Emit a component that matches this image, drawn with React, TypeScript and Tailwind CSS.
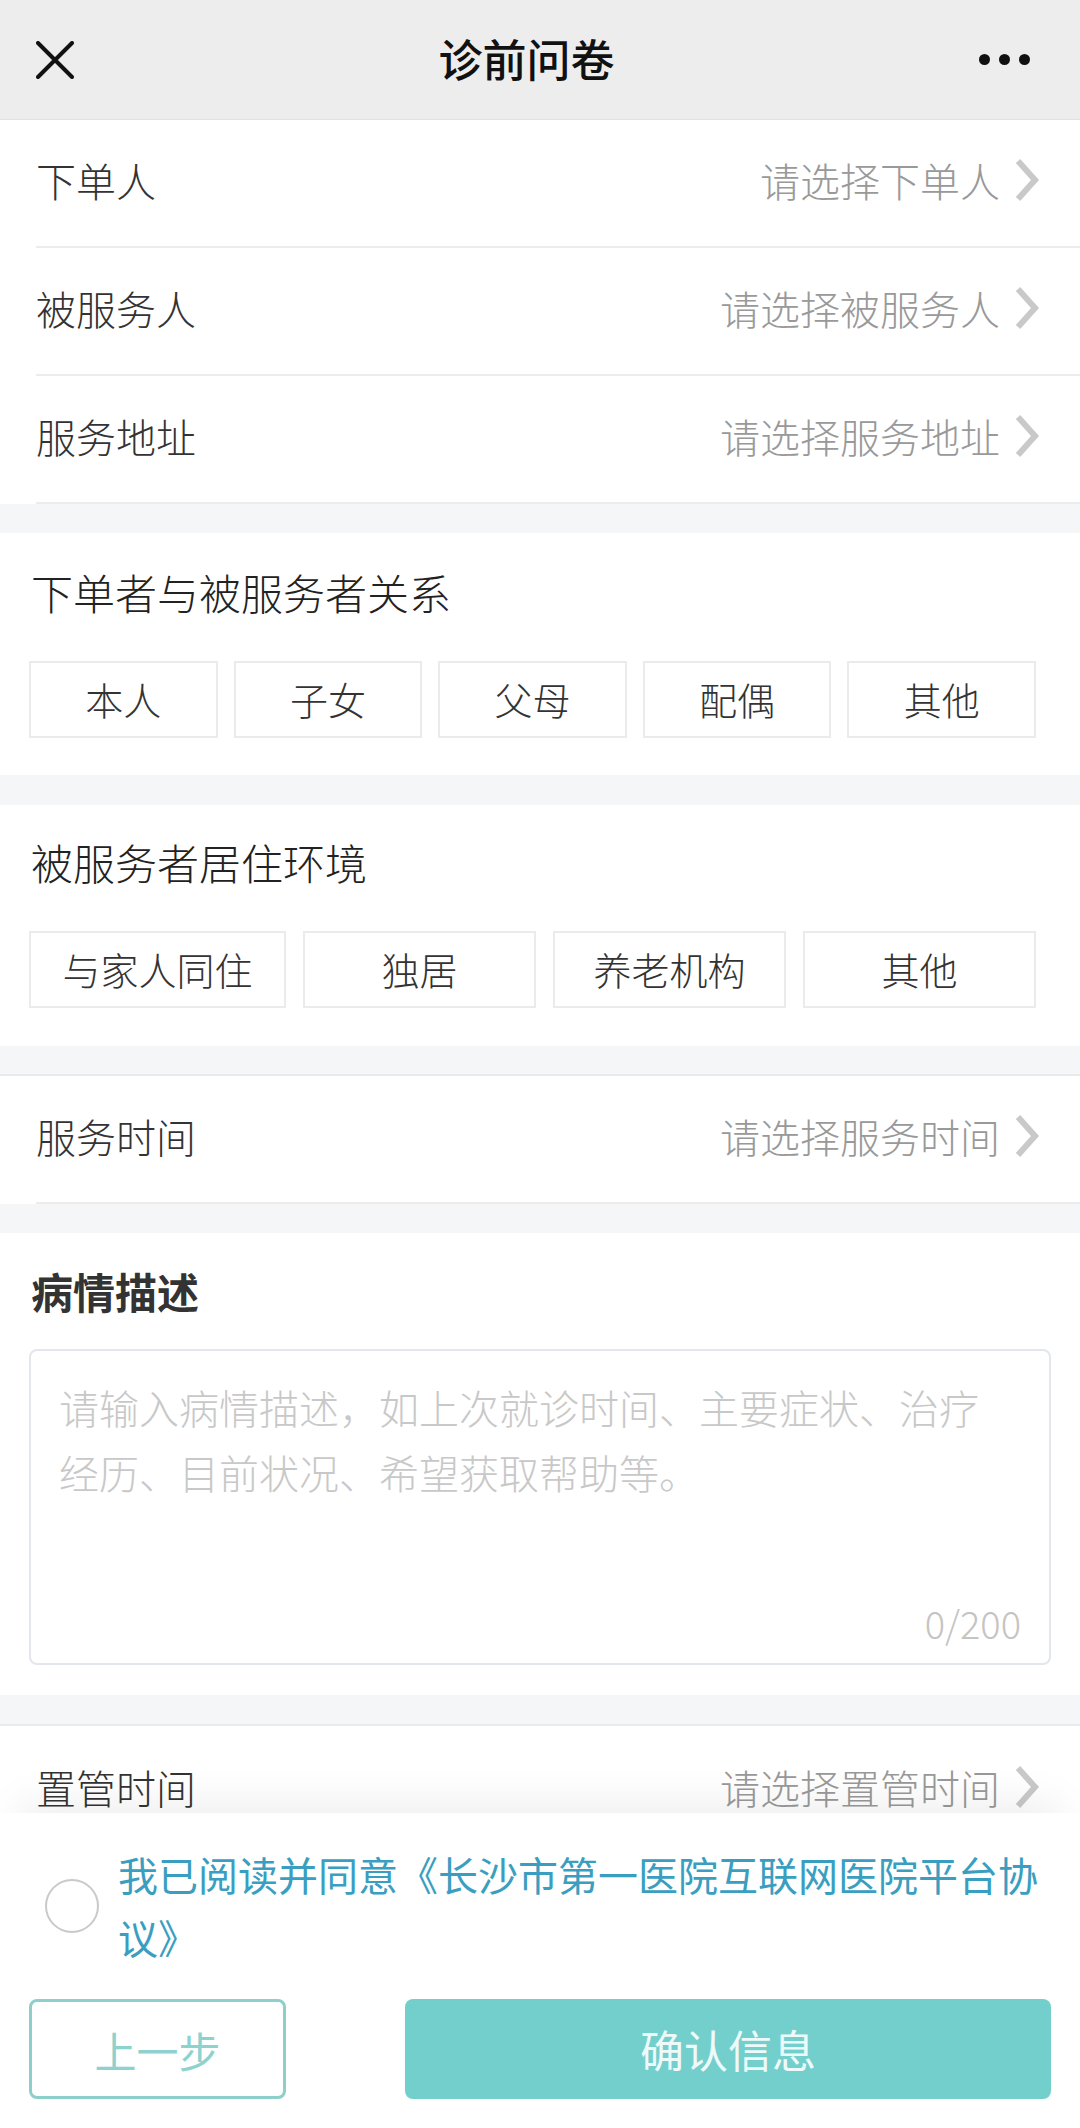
import type { ReactNode } from "react";

const font = { fontFamily: '"Noto Sans CJK SC", "Noto Sans", sans-serif' };

function Chevron() {
  return (
    <svg width="26" height="44" viewBox="0 0 26 44" fill="none" className="shrink-0">
      <path d="M4 3 L21 22 L4 41" stroke="#c9c9c9" strokeWidth="6" strokeLinejoin="miter" />
    </svg>
  );
}

function PickRow({ label, value, last = false }: { label: string; value: string; last?: boolean }) {
  return (
    <div className="pl-[36px] bg-white">
      <div
        className={`h-[128px] flex items-center justify-between pr-[40px] pb-[6px] ${
          last ? "" : "border-b-2 border-[#ececec]"
        }`}
      >
        <span className="text-[40px] font-light text-[#333]">{label}</span>
        <div className="flex items-center gap-[14px]">
          <span className="text-[40px] font-light text-[#999]">{value}</span>
          <Chevron />
        </div>
      </div>
    </div>
  );
}

function Section({ children, className = "" }: { children: ReactNode; className?: string }) {
  return <div className={`bg-white ${className}`}>{children}</div>;
}

function Option({ text }: { text: string }) {
  return (
    <div className="h-[77px] border-2 border-[#ebebeb] flex items-center justify-center pb-[3px] text-[38px] font-light text-[#333]">
      {text}
    </div>
  );
}

export default function App() {
  return (
    <div style={font} className="w-[1080px] h-[2128px] flex flex-col bg-[#f5f6f8] overflow-hidden">
      {/* header */}
      <div className="h-[120px] shrink-0 bg-[#ededed] flex items-center justify-between px-[36px] border-b border-[#e2e2e2]">
        <svg width="38" height="38" viewBox="0 0 38 38">
          <path d="M2 2 L36 36 M36 2 L2 36" stroke="#111" strokeWidth="4" strokeLinecap="round" />
        </svg>
        <span className="text-[44px] font-medium text-[#111] pb-[4px]">诊前问卷</span>
        <div className="flex items-center gap-[9px] pr-[14px]">
          <span className="w-[11px] h-[11px] rounded-full bg-[#111]" />
          <span className="w-[11px] h-[11px] rounded-full bg-[#111]" />
          <span className="w-[11px] h-[11px] rounded-full bg-[#111]" />
        </div>
      </div>

      <div className="flex-1 min-h-0 overflow-hidden flex flex-col">
        <Section>
          <PickRow label="下单人" value="请选择下单人" />
          <PickRow label="被服务人" value="请选择被服务人" />
          <PickRow label="服务地址" value="请选择服务地址" />
        </Section>

        <Section className="mt-[29px] pt-[29px] pb-[37px] px-[29px]">
          <div className="text-[42px] leading-[60px] font-light text-[#222] pl-[2px]">下单者与被服务者关系</div>
          <div className="mt-[39px] grid grid-cols-5 gap-[16px] pr-[15px]">
            {["本人", "子女", "父母", "配偶", "其他"].map((t) => (
              <Option key={t} text={t} />
            ))}
          </div>
        </Section>

        <Section className="mt-[30px] pt-[27px] pb-[38px] px-[29px]">
          <div className="text-[42px] leading-[60px] font-light text-[#222] pl-[2px]">被服务者居住环境</div>
          <div className="mt-[39px] grid grid-cols-[257px_233px_233px_233px] gap-[17px]">
            {["与家人同住", "独居", "养老机构", "其他"].map((t) => (
              <Option key={t} text={t} />
            ))}
          </div>
        </Section>

        <Section className="mt-[28px] border-t-2 border-[#e8ebee]">
          <PickRow label="服务时间" value="请选择服务时间" />
        </Section>

        <Section className="mt-[29px] pt-[28px] pb-[30px] px-[29px]">
          <div className="text-[42px] leading-[60px] font-bold text-[#333] pl-[2px]">病情描述</div>
          <div className="mt-[28px] h-[316px] border-2 border-[#e3e7eb] rounded-[8px] flex flex-col justify-between pt-[24px] pb-[18px] pl-[28px] pr-[28px]">
            <div className="text-[40px] leading-[65px] font-light text-[#c8c8c8]">
              请输入病情描述，如上次就诊时间、主要症状、治疗
              <br />
              经历、目前状况、希望获取帮助等。
            </div>
            <div className="text-right text-[38px] leading-[44px] font-light text-[#c4c4c4]">0/200</div>
          </div>
        </Section>

        <Section className="mt-[29px] border-t-2 border-[#e8ebee]">
          <PickRow label="置管时间" value="请选择置管时间" last />
        </Section>
      </div>

      {/* footer */}
      <div className="relative z-10 h-[315px] shrink-0 bg-white shadow-[0_-30px_40px_-20px_rgba(0,0,0,0.07)] pt-[30px] px-[29px]">
        <div className="flex items-center">
          <div className="ml-[16px] w-[54px] h-[54px] rounded-full border-2 border-[#c9c9c9] shrink-0" />
          <div className="ml-[19px] w-[930px] text-[40px] leading-[63px] text-[#3a9ec0]">
            我已阅读并同意《长沙市第一医院互联网医院平台协议》
          </div>
        </div>
        <div className="mt-[30px] flex justify-between">
          <button className="w-[257px] h-[100px] rounded-[8px] border-[3px] border-[#8ccfcb] text-[42px] text-[#8ed2ce]">
            上一步
          </button>
          <button className="w-[646px] h-[100px] rounded-[8px] bg-[#73cfcc] text-[44px] text-[#eefaf9]">
            确认信息
          </button>
        </div>
      </div>
    </div>
  );
}
